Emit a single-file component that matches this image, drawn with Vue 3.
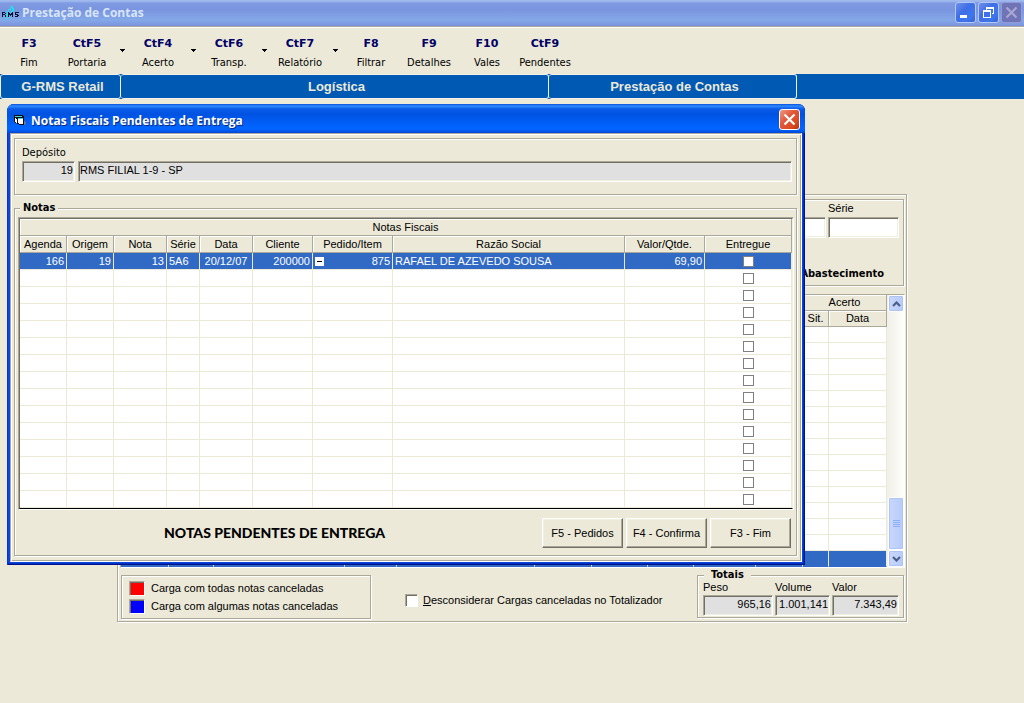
<script setup>
import { reactive } from 'vue'

const tools = [
  { key: 'F3', label: 'Fim' },
  { key: 'CtF5', label: 'Portaria', menu: true },
  { key: 'CtF4', label: 'Acerto', menu: true },
  { key: 'CtF6', label: 'Transp.', menu: true },
  { key: 'CtF7', label: 'Relatório', menu: true },
  { key: 'F8', label: 'Filtrar' },
  { key: 'F9', label: 'Detalhes' },
  { key: 'F10', label: 'Vales' },
  { key: 'CtF9', label: 'Pendentes' }
]

const columns = [
  { name: 'Agenda', cls: 'c-agenda' },
  { name: 'Origem', cls: 'c-origem' },
  { name: 'Nota', cls: 'c-nota' },
  { name: 'Série', cls: 'c-serie' },
  { name: 'Data', cls: 'c-data' },
  { name: 'Cliente', cls: 'c-cliente' },
  { name: 'Pedido/Item', cls: 'c-pedido' },
  { name: 'Razão Social', cls: 'c-razao' },
  { name: 'Valor/Qtde.', cls: 'c-valor' },
  { name: 'Entregue', cls: 'c-entregue' }
]

const notas = reactive([
  {
    agenda: '166', origem: '19', nota: '13', serie: '5A6', data: '20/12/07', cliente: '200000',
    pedido: '875', razao: 'RAFAEL DE AZEVEDO SOUSA', valor: '69,90', entregue: false
  },
  ...Array.from({ length: 14 }, () => ({ entregue: false }))
])

const cargaColumns = ['k1', 'k2', 'k3', 'k4', 'k5', 'k6', 'k7', 'k8', 'k9', 'k10', 'k11', 'k12']
</script>

<template>
  <div class="app">
    <header class="titlebar">
      <svg class="logo" width="18" height="16" viewBox="0 0 18 16" aria-hidden="true">
        <path d="M9 1h2v2H9v2H7v3H6v3H4v3H3v-2h1V9h1V6h1V4h2z M10 3h2v3h-1v3h-1v2H8v2H6v2H4v-1h2v-2h2V9h1V6h1z" fill="#22e0ec" />
        <path d="M0 7h3v1H1v1H0z M0 9h1v3H0z M3 8h1v1H3z M1 9h2v1H1z M3 10h1v2H3z M6 7h1v1h1v1h1V8h1V7h1v5h-1v-2H9v1H8v-1H7v2H6z M13 7h4v1h-3v1h2v1h1v1h-1v1h-3v-1h2v-1h-2z" fill="#0a1030" />
      </svg>
      <h1>Prestação de Contas</h1>
      <div class="win-buttons">
        <button type="button" class="wb" aria-label="Minimizar">
          <svg width="19" height="19" viewBox="0 0 19 19"><rect x="4" y="12" width="7" height="3" fill="#fff" /></svg>
        </button>
        <button type="button" class="wb" aria-label="Restaurar">
          <svg width="19" height="19" viewBox="0 0 19 19" fill="#fff">
            <path d="M7 4h8v7h-2v-1h1V6H8v1H7z M4 7h8v8H4z M5 9v5h6V9z" fill-rule="evenodd" />
          </svg>
        </button>
        <button type="button" class="wb off" aria-label="Fechar" disabled>
          <svg width="19" height="19" viewBox="0 0 19 19"><path d="M4.500 4.500l10 10M14.500 4.500l-10 10" stroke="#a9a6d2" stroke-width="2.200" /></svg>
        </button>
      </div>
    </header>

    <nav class="toolbar">
      <template v-for="t in tools" :key="t.key">
        <button type="button" class="tool"><b>{{ t.key }}</b><span>{{ t.label }}</span></button>
        <button v-if="t.menu" type="button" class="drop" :aria-label="'Menu ' + t.label">
          <svg width="5" height="3" viewBox="0 0 5 3"><path d="M0 0h5v1H4v1H3v1H2V2H1V1H0z" /></svg>
        </button>
      </template>
    </nav>

    <nav class="crumbs">
      <a href="#">G-RMS Retail</a>
      <a href="#">Logística</a>
      <a href="#">Prestação de Contas</a>
    </nav>

    <main class="panel etched">
      <section class="filters etched">
        <div class="filter-fields">
          <input type="text" class="sunken prev" aria-label="Nota" />
          <div class="serie">
            <label for="serie">Série</label>
            <input id="serie" type="text" class="sunken" />
          </div>
        </div>
        <b class="abast">Abastecimento</b>
      </section>

      <div class="cargas">
        <table>
          <colgroup><col v-for="c in cargaColumns" :key="c" :class="c" /></colgroup>
          <thead>
            <tr><th colspan="10"></th><th colspan="2" class="acerto">Acerto</th></tr>
            <tr><th v-for="n in 10" :key="n"></th><th>Sit.</th><th>Data</th></tr>
          </thead>
          <tbody>
            <tr v-for="r in 15" :key="r" :class="{ sel: r === 15 }"><td v-for="n in 12" :key="n"></td></tr>
          </tbody>
        </table>
        <div class="scroll">
          <button type="button" aria-label="Subir">
            <svg width="9" height="6" viewBox="0 0 9 6"><path d="M1 5l3.500-3.500L8 5" stroke="#4d6185" stroke-width="2.200" fill="none" /></svg>
          </button>
          <div class="track"></div>
          <div class="thumb"><i></i><i></i><i></i><i></i></div>
          <button type="button" aria-label="Descer">
            <svg width="9" height="6" viewBox="0 0 9 6"><path d="M1 1l3.500 3.500L8 1" stroke="#4d6185" stroke-width="2.200" fill="none" /></svg>
          </button>
        </div>
      </div>

      <footer class="bottom">
        <div class="legend etched">
          <p><i class="swatch red"></i>Carga com todas notas canceladas</p>
          <p><i class="swatch blue"></i>Carga com algumas notas canceladas</p>
        </div>
        <label class="ignore"><input type="checkbox" /><span><u>D</u>esconsiderar Cargas canceladas no Totalizador</span></label>
        <fieldset class="totals etched">
          <legend>Totais</legend>
          <div class="total-fields">
            <div class="peso"><label for="peso">Peso</label><input id="peso" class="sunken gray num" value="965,16" readonly /></div>
            <div class="volume"><label for="volume">Volume</label><input id="volume" class="sunken gray num" value="1.001,141" readonly /></div>
            <div class="valor"><label for="valor">Valor</label><input id="valor" class="sunken gray num" value="7.343,49" readonly /></div>
          </div>
        </fieldset>
      </footer>
    </main>

    <section class="dialog" role="dialog" aria-labelledby="dialog-title">
      <header class="dialog-title">
        <svg width="14" height="14" viewBox="0 0 14 14" aria-hidden="true">
          <path d="M1 2h9v1h1v9H6v-1H4v-1H2V9H1z" fill="#0c0c10" />
          <path d="M2 3h7v1H2z" fill="#45d6d6" />
          <path d="M2 5h1v1h1v4H3V9H2z M5 6h5v5H6v-1H5z" fill="#fff" />
          <path d="M5 5h5v1H5z" fill="#45d6d6" />
          <path d="M11 8h1v1h1v2h-1v1h-1z" fill="#67779a" />
        </svg>
        <h2 id="dialog-title">Notas Fiscais Pendentes de Entrega</h2>
        <button type="button" class="wb close" aria-label="Fechar">
          <svg width="19" height="19" viewBox="0 0 19 19"><path d="M4.500 4.500l10 10M14.500 4.500l-10 10" stroke="#fff" stroke-width="2.200" /></svg>
        </button>
      </header>

      <div class="dialog-body">
        <div class="deposito etched">
          <label for="deposito">Depósito</label>
          <div class="dep-fields">
            <input id="deposito" class="sunken gray num" value="19" readonly />
            <input class="sunken gray" value="RMS FILIAL 1-9 - SP" aria-label="Nome do depósito" readonly />
          </div>
        </div>

        <fieldset class="notas etched">
          <legend>Notas</legend>
          <div class="grid-box">
            <table class="grid">
              <colgroup><col v-for="c in columns" :key="c.cls" :class="c.cls" /></colgroup>
              <thead>
                <tr><th :colspan="columns.length" class="caption">Notas Fiscais</th></tr>
                <tr><th v-for="c in columns" :key="c.name">{{ c.name }}</th></tr>
              </thead>
              <tbody>
                <tr v-for="(n, i) in notas" :key="i" :class="{ sel: i === 0 }">
                  <td class="r">{{ n.agenda }}</td>
                  <td class="r">{{ n.origem }}</td>
                  <td class="r">{{ n.nota }}</td>
                  <td>{{ n.serie }}</td>
                  <td class="c">{{ n.data }}</td>
                  <td class="r">{{ n.cliente }}</td>
                  <td>
                    <div v-if="n.pedido" class="pedido">
                      <button type="button" class="toggle" aria-label="Recolher"></button>
                      <span>{{ n.pedido }}</span>
                    </div>
                  </td>
                  <td>{{ n.razao }}</td>
                  <td class="r">{{ n.valor }}</td>
                  <td class="c"><input v-model="n.entregue" type="checkbox" :aria-label="'Entregue ' + (i + 1)" /></td>
                </tr>
              </tbody>
            </table>
          </div>
          <div class="actions">
            <strong>NOTAS PENDENTES DE ENTREGA</strong>
            <button type="button">F5 - Pedidos</button>
            <button type="button">F4 - Confirma</button>
            <button type="button">F3 - Fim</button>
          </div>
        </fieldset>
      </div>
    </section>
  </div>
</template>

<style>
body { background: #ece9d8; }
</style>

<style scoped>
.app, .app * { box-sizing: border-box; }
.app {
  position: relative;
  overflow: hidden;
  min-height: 100vh;
  background: #ece9d8;
  color: #000;
  font: 11px/14px "Liberation Sans", Arial, sans-serif;
}
.app button, .app input { font: inherit; color: inherit; margin: 0; padding: 0; }
h1, h2, p { margin: 0; }
button { border: 0; background: none; }
svg { display: block; }
table { border-collapse: separate; border-spacing: 0; table-layout: fixed; width: 100%; }
th { font-weight: normal; }

.etched {
  border: 1px solid #aca899;
  box-shadow: 1px 1px 0 #fff, inset 1px 1px 0 #fff;
}
.sunken {
  display: block;
  width: 100%;
  height: 21px;
  border: 1px solid;
  border-color: #aca899 #fff #fff #aca899;
  border-radius: 0;
  background: #fff;
  box-shadow: inset 1px 1px 0 #716f64, inset -1px -1px 0 #f1efe2;
  outline: 0;
}
.app .sunken { padding: 0 1px 4px; }
.gray { background: #e0e0e0; }
.num { text-align: right; }

/* main window */
.titlebar {
  display: flex;
  align-items: center;
  height: 28px;
  padding: 0 2px 2px;
  border-bottom: 1px solid #fff;
  box-shadow: inset 0 -1px 0 #aca899;
  background: linear-gradient(#9db4ea 0, #a2bdf0 1px, #809be2 3px, #7a95df 10px, #84a8e8 20px, #7d97df 25px, #7590d8 26px);
}
h1, h2 { flex: 1; font: bold 12px/16px "Open Sans", "Noto Sans", sans-serif; }
h1 { padding: 1px 0 0 2px; color: #d8e4f8; }
.win-buttons { display: flex; gap: 2px; }
.wb {
  width: 21px;
  height: 21px;
  border-radius: 3px;
  background: linear-gradient(135deg, #7090ea, #3f6fe6 40%, #3e76ee 75%, #3a60d0);
}
.app .wb { border: 1px solid #b4c6f2; }
.app .wb.off { border-color: #9299d4; background: #6f74b6; }
.app .wb.close { border-color: #fff; background: linear-gradient(135deg, #ee9a80, #e2583a 40%, #dc4a22 75%, #b93208); }

.toolbar { display: flex; height: 46px; padding-top: 9px; }
.tool { width: 58px; height: 34px; display: flex; flex-direction: column; align-items: center; gap: 5px; white-space: nowrap; }
.tool b { font: bold 11px/14px "DejaVu Sans", sans-serif; color: #000066; }
.tool span { font: 11px/14px "DejaVu Sans Condensed", "Noto Sans", sans-serif; }
.drop { width: 13px; height: 26px; display: flex; align-items: center; justify-content: center; }

.crumbs { display: flex; height: 25px; background: #0059b3; }
.crumbs a {
  padding-left: 4px;
  border: 1px solid #f4f2e8;
  border-left-width: 0;
  border-radius: 3px;
  color: #ece9d8;
  font: bold 13px/24px "Liberation Sans", Arial, sans-serif;
  text-align: center;
  text-decoration: none;
}
.crumbs a:nth-child(1) { width: 121px; border-left-width: 1px; }
.crumbs a:nth-child(2) { width: 428px; }
.crumbs a:nth-child(3) { width: 248px; }

.panel { margin: 95px 117px 0; padding: 4px 1px 2px 2px; }
.filters { height: 87px; margin-right: 1px; padding: 1px 4px 0 0; }
.filter-fields { display: flex; justify-content: flex-end; align-items: flex-end; gap: 2px; }
.prev { width: 120px; }
.serie { width: 71px; }
.serie label { display: block; height: 16px; }
.abast { display: block; margin-top: 28px; padding-right: 15px; text-align: right; font: bold 11px/16px "DejaVu Sans Condensed", "Noto Sans", sans-serif; }

.cargas {
  display: flex;
  height: 274px;
  margin-top: 8px;
  border: 1px solid #aca899;
  border-right-color: #fff;
  border-bottom-color: #fff;
}
.cargas table { flex: 1; width: auto; align-self: flex-start; background: #fff; }
.cargas th { height: 16px; padding: 0; line-height: 15px; background: #ece9d8; border-right: 1px solid #aca899; border-bottom: 1px solid #aca899; box-shadow: inset 1px 1px 0 #fff; }
.cargas td { height: 16px; padding: 0; border-right: 1px solid #ece9d8; border-bottom: 1px solid #ece9d8; }
.cargas .sel td { background: #316ac5; border-bottom-color: #316ac5; }
.k2 { width: 45px; } .k3 { width: 131px; } .k4 { width: 52px; } .k5 { width: 138px; }
.k6 { width: 57px; } .k7 { width: 56px; } .k8 { width: 46px; } .k9 { width: 62px; }
.k10 { width: 47px; } .k11 { width: 26px; } .k12 { width: 58px; }

.scroll { width: 17px; display: flex; flex-direction: column; background: linear-gradient(90deg, #f0efe8, #fefefb); padding-left: 1px; }
.app .scroll button, .thumb {
  border: 1px solid #fff;
  border-radius: 2px;
  background: linear-gradient(90deg, #c9d7fd, #b7cbfb);
  box-shadow: inset 0 0 0 1px #b0c4f4;
}
.scroll button { height: 17px; display: flex; align-items: center; justify-content: center; }
.track { flex: 1; }
.thumb { height: 53px; display: flex; flex-direction: column; align-items: center; justify-content: center; gap: 1px; }
.thumb i { width: 7px; height: 1px; background: #8cb0f8; }

.bottom { display: flex; align-items: flex-start; height: 51px; margin-right: 1px; padding-left: 1px; }
.legend { width: 250px; height: 44px; margin-top: 7px; padding: 3px 0 0 7px; }
.legend p { display: flex; align-items: center; gap: 6px; height: 18px; }
.swatch { width: 16px; height: 15px; border: 1px solid; border-color: #aca899 #fff #fff #aca899; box-shadow: inset 1px 1px 0 #716f64; }
.red { background: #f00; }
.blue { background: #00f; }
.ignore { display: flex; align-items: center; gap: 5px; margin: 25px auto 0 34px; }
.ignore input {
  appearance: none;
  width: 13px;
  height: 13px;
  background: #fff;
  border: 1px solid;
  border-color: #aca899 #fff #fff #aca899;
  box-shadow: inset 1px 1px 0 #716f64;
}
fieldset { min-width: 0; margin: 0; padding: 0; }
legend { font: bold 11px/14px "DejaVu Sans Condensed", "Noto Sans", sans-serif; background: #ece9d8; }
.totals { width: 207px; height: 50px; padding: 0 4px 0 5px; }
.totals legend { margin-left: 1px; padding: 0 7px; }
.total-fields { display: flex; gap: 2px; }
.total-fields label { display: block; height: 13px; line-height: 11px; }
.peso { width: 70px; } .volume { width: 55px; } .valor { flex: 1; }

/* dialog window */
.dialog {
  position: absolute;
  left: 7px;
  top: 104px;
  width: 798px;
  border-radius: 7px 7px 0 0;
  background: #0b45e0;
  padding: 0 3px 3px;
  box-shadow: inset 1px 0 0 #0831d9, inset -1px -1px 0 #00138c, inset -2px -2px 0 #0030c0;
}
.dialog-title {
  display: flex;
  align-items: center;
  height: 29px;
  margin: 0 -3px;
  padding: 2px 5px 0 6px;
  border-radius: 7px 7px 0 0;
  background: linear-gradient(#0850d8 0, #2f8bff 2px, #0a5ae8 5px, #0052e0 10px, #0060fa 20px, #0066ff 25px, #0048d8 29px);
}
h2 { padding: 2px 0 0 4px; color: #fff; text-shadow: 1px 1px 0 #0a2a80; }
.dialog-body { padding: 4px 3px; background: #ece9d8; border: 1px solid #aca899; border-right-color: #fff; border-bottom-color: #fff; box-shadow: inset 1px 1px 0 #fff, inset -1px -1px 0 #aca899; }
.deposito { height: 57px; margin-right: 1px; padding: 7px 4px 0 7px; }
.deposito label { display: block; height: 15px; font: 11px/13px "DejaVu Sans Condensed", "Noto Sans", sans-serif; }
.dep-fields { display: flex; gap: 3px; }
.dep-fields input:first-child { width: 53px; flex: none; }

.notas { margin: 6px 1px 1px 0; padding: 2px 2px 7px 3px; }
.notas legend { margin-left: 2px; padding: 0 3px; }
.grid-box { border: 1px solid; border-color: #aca899 #fff #fff #aca899; }
.grid { background: #fff; border: 1px solid; border-color: #716f64 #f1efe2 #000 #716f64; }
.grid th { height: 17px; padding: 0; line-height: 16px; background: #ece9d8; border-right: 1px solid #aca899; border-bottom: 1px solid #aca899; box-shadow: inset 1px 1px 0 #fff; }
.grid td { height: 17px; padding: 0 2px; line-height: 16px; border-right: 1px solid #ece9d8; border-bottom: 1px solid #ece9d8; white-space: nowrap; }
.grid .r { text-align: right; }
.grid .c { text-align: center; }
.grid .sel td { background: #316ac5; color: #fff; }
.grid input { appearance: none; display: block; width: 11px; height: 11px; border: 1px solid #808080; background: #fff; }
.app .grid input { margin: 0 auto; }
.c-agenda, .c-origem { width: 47px; }
.c-nota, .c-data { width: 53px; }
.c-serie { width: 33px; }
.c-cliente { width: 60px; }
.c-pedido, .c-valor { width: 80px; }
.c-entregue { width: 87px; }
.pedido { display: flex; align-items: center; justify-content: space-between; }
.app .toggle { width: 9px; height: 9px; border: 1px solid #fff; background: linear-gradient(#000, #000) center / 5px 1px no-repeat #fff; }

.actions { display: flex; align-items: center; gap: 3px; padding: 8px 3px 0 0; }
.actions strong { flex: 1; padding-right: 8px; text-align: center; font: 900 14px/16px "Lato", sans-serif; }
.app .actions button {
  width: 81px;
  height: 30px;
  border: 1px solid;
  border-color: #fff #716f64 #716f64 #fff;
  box-shadow: inset -1px -1px 0 #aca899, inset 1px 1px 0 #f1efe2;
}
</style>
